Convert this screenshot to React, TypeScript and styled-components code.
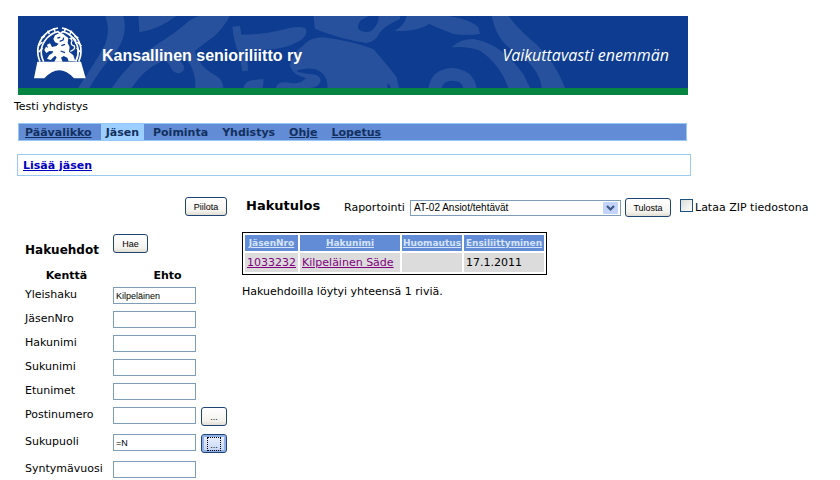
import React, { useState } from "react";
import styled, { createGlobalStyle } from "styled-components";

const GlobalStyle = createGlobalStyle`
  *, *::before, *::after { box-sizing: border-box; }
  body {
    margin: 0;
    background: #fff;
    color: #000;
    font-family: "DejaVu Sans", Verdana, sans-serif;
    font-size: 11px;
    line-height: 14px;
  }
`;

const Page = styled.div`
  padding: 16px 14px 0;
`;

const Banner = styled.header`
  display: flex;
  align-items: center;
  justify-content: space-between;
  position: relative;
  overflow: hidden;
  max-width: 670px;
  height: 79px;
  margin-left: 4px;
  padding: 0 19px 0 12px;
  border-bottom: 7px solid #058442;
  background: #0d3c90;
  color: #fff;
`;

const Watermark = styled.svg`
  position: absolute;
  top: 0;
  left: 0;
  width: 670px;
  height: 72px;
  fill: #27519c;
`;

const Brand = styled.div`
  display: flex;
  align-items: center;
  gap: 12px;
  position: relative;
  padding-top: 4px;
`;

const Emblem = styled.svg`
  width: 60px;
  height: 60px;
`;

const Organisation = styled.h1`
  margin: 4px 0 0;
  font: bold 16px/20px "Liberation Sans", Arial, sans-serif;
`;

const Slogan = styled.p`
  position: relative;
  margin: 6px 0 0;
  font: italic 16px/20px "Open Sans", sans-serif;
`;

const Association = styled.p`
  margin: 5px 0 0;
`;

const Menu = styled.nav`
  display: flex;
  align-items: stretch;
  gap: 4px;
  max-width: 669px;
  height: 18px;
  margin: 9px 0 0 4px;
  padding-left: 1px;
  border: 1px solid #98c8f8;
  background: #638cd6;
  font-weight: bold;
  line-height: 18px;
`;

const MenuLink = styled.a<{ $current?: boolean; $plain?: boolean }>`
  padding: 0 5px;
  background: ${(p) => (p.$current ? "#9cceff" : "transparent")};
  color: #12305f;
  text-decoration: ${(p) => (p.$plain ? "none" : "underline")};
`;

const SubMenu = styled.nav`
  display: flex;
  align-items: center;
  max-width: 674px;
  height: 22px;
  margin: 13px 0 0 3px;
  padding: 2px 0 0 5px;
  border: 1px solid #9ccaee;
  font-weight: bold;
`;

const SubLink = styled.a`
  color: #0000c0;
`;

const Columns = styled.main`
  display: grid;
  grid-template-columns: 202px 1fr;
  gap: 15px;
  margin: 21px 0 0 11px;
`;

const Criteria = styled.form``;

const HideRow = styled.div`
  display: flex;
  justify-content: flex-end;
`;

const HeadRow = styled.div`
  display: grid;
  grid-template-columns: 88px 1fr;
  align-items: start;
  justify-items: start;
  margin-top: 18px;
`;

const SearchTitle = styled.h2`
  margin: 8px 0 0;
  font-size: 12px;
  line-height: 16px;
`;

const ResultTitle = styled.h2`
  width: 98px;
  margin: 0;
  padding: 0 0 4px 4px;
  font-size: 13px;
  line-height: 16px;
`;

const Button = styled.button<{ $width: number; $active?: boolean }>`
  width: ${(p) => p.$width}px;
  height: 19px;
  padding: 1px 0 0;
  border: 1px solid #1f4373;
  border-radius: 3px;
  background: ${(p) => (p.$active ? "linear-gradient(#eef3fd, #c4d5f5)" : "linear-gradient(#fff, #f4f3ee 75%, #e0ddd2)")};
  box-shadow: ${(p) => (p.$active ? "inset 0 0 0 2px #8fb0e8" : "none")};
  color: #000;
  font: 9px/15px "Liberation Sans", Arial, sans-serif;
`;

const DotFocus = styled.span`
  display: block;
  width: 14px;
  height: 14px;
  margin: 0 auto;
  border: 1px dotted #000;
  line-height: 14px;
`;

const FieldHeads = styled.div`
  display: grid;
  grid-template-columns: 83px 1fr;
  margin: 11px 0 4px;
  font-weight: bold;
  text-align: center;
`;

const FieldRow = styled.div<{ $tall?: boolean }>`
  display: grid;
  grid-template-columns: 83px 83px 26px;
  column-gap: 5px;
  align-items: start;
  height: ${(p) => (p.$tall ? 27 : 24)}px;
`;

const FieldLabel = styled.label`
  padding-top: 1px;
`;

const TextBox = styled.input`
  width: 100%;
  height: 17px;
  padding: 0 2px;
  border: 1px solid #7f9db9;
  border-radius: 0;
  background: #fff;
  font: 9px/15px "Liberation Sans", Arial, sans-serif;
`;

const Results = styled.section`
  min-width: 0;
`;

const Toolbar = styled.div`
  display: flex;
  align-items: center;
  gap: 4px;
  height: 21px;
`;

const SelectFrame = styled.span`
  display: grid;
  grid-template-columns: 1fr 16px;
  align-items: center;
  width: 211px;
  height: 16px;
  padding-right: 1px;
  border: 1px solid #7f9db9;
`;

const Select = styled.select`
  grid-area: 1 / 1 / 2 / 3;
  width: 100%;
  height: 14px;
  padding: 0 18px 0 3px;
  border: 0;
  appearance: none;
  background: transparent;
  color: #000;
  font: 10px/14px "Liberation Sans", Arial, sans-serif;
`;

const Arrow = styled.svg`
  grid-area: 1 / 2 / 2 / 3;
  width: 15px;
  height: 12px;
  pointer-events: none;
`;

const ToolLabel = styled.label`
  width: 62px;
  white-space: nowrap;
`;

const ZipLabel = styled.label`
  display: flex;
  align-items: center;
  gap: 2px;
  margin-left: 5px;
  white-space: nowrap;
`;

const Tick = styled.input`
  width: 13px;
  height: 13px;
  margin: 0 0 4px;
  border: 1px solid #1d5281;
  appearance: none;
  background: linear-gradient(135deg, #dcdcd7, #fff);
  &:checked { background: #21a121; }
`;

const ResultTable = styled.table`
  margin-top: 14px;
  border: 1px solid #000;
  border-collapse: separate;
  border-spacing: 2px;
`;

const HeadCell = styled.th<{ $width: number }>`
  width: ${(p) => p.$width}px;
  height: 16px;
  padding: 0;
  background: #638cd6;
  font-size: 9px;
  line-height: 12px;
  text-align: center;
`;

const SortLink = styled.a`
  color: #d5e4fb;
`;

const Cell = styled.td`
  height: 19px;
  padding: 1px 2px 0;
  background: #dcdcdc;
  line-height: 14px;
  white-space: nowrap;
`;

const RecordLink = styled.a`
  color: #800080;
`;

const Summary = styled.p`
  margin: 10px 0 0;
`;

const menu = [
  { label: "Päävalikko" },
  { label: "Jäsen", current: true, plain: true },
  { label: "Poiminta", plain: true },
  { label: "Yhdistys", plain: true },
  { label: "Ohje" },
  { label: "Lopetus" },
];

const fields = [
  { id: "yleishaku", label: "Yleishaku", value: "Kilpeläinen" },
  { id: "jasennro", label: "JäsenNro", value: "" },
  { id: "hakunimi", label: "Hakunimi", value: "" },
  { id: "sukunimi", label: "Sukunimi", value: "" },
  { id: "etunimet", label: "Etunimet", value: "" },
  { id: "postinumero", label: "Postinumero", value: "", picker: true },
  { id: "sukupuoli", label: "Sukupuoli", value: "=N", picker: true, active: true },
  { id: "syntymavuosi", label: "Syntymävuosi", value: "" },
];

const columns = [
  { label: "JäsenNro", width: 53 },
  { label: "Hakunimi", width: 100 },
  { label: "Huomautus", width: 60 },
  { label: "Ensiliittyminen", width: 80 },
];

function BannerArt() {
  return (
    <Watermark viewBox="0 0 670 72" aria-hidden="true">
      <g transform="translate(62 -2) scale(.33333)">
        <path d="M75 5H130Q145 60 110 110Q60 165 28 222H-6Q50 140 76 90Q92 45 75 5Z" />
        <path d="M175 5H290Q240 45 178 55Z" />
        <path d="M95 222Q150 140 225 95Q290 55 322 25Q345 5 370 5H450Q435 35 405 65Q370 90 345 110Q350 150 400 180Q430 195 430 222H345Q350 190 330 150Q315 130 300 140Q325 165 300 177Q280 180 272 160Q265 140 250 140Q190 165 155 222Z" />
        <path d="M457 38L480 35L484 62Q550 62 605 48Q650 34 676 42Q686 56 668 74Q640 96 590 104Q540 110 500 108L503 150L505 170L487 172L478 120Q462 90 457 38Z" />
        <path d="M490 222Q495 200 520 198L550 195Q552 205 548 222Z" />
        <path d="M588 222Q590 202 620 205Q660 215 678 192Q640 185 632 160Q650 178 690 180Q720 180 722 200Q715 222 690 222Z" />
      </g>
      <g transform="translate(282 -2) scale(.33333)">
        <path d="M-30 155Q-24 118 12 92Q30 70 70 70Q150 80 220 105Q260 150 290 190L297 222H272Q270 208 262 210V222H82Q85 180 45 165Q10 160-15 172Q-28 166-30 155Z" />
        <path d="M40 5L45 45Q120 75 200 87Q225 85 240 55Q255 35 300 15L300 5H235Q240 25 215 50Q190 60 175 45Q170 20 200 10L205 5Z" />
        <path d="M320 5H440Q510 15 535 40L540 60Q500 65 460 60Q420 45 388 30Q350 55 283 50Q315 35 320 5Z" />
        <path d="M455 100Q480 75 520 75Q600 85 670 180L690 222H625Q600 150 540 110Q500 95 455 100Z" />
        <path d="M575 5H625Q650 40 690 75Q760 130 795 222H725Q720 160 640 110Q590 80 575 5Z" />
        <path d="M385 222Q395 165 455 162Q520 165 530 222H490Q485 200 458 200Q430 200 425 222Z" />
      </g>
    </Watermark>
  );
}

function LionEmblem() {
  return (
    <Emblem viewBox="0 0 180 180" aria-hidden="true" fill="none" stroke="#fff">
      <path d="M30 113Q12 70 42 35Q58 16 84 12M146 113Q164 70 136 35Q120 16 96 12" strokeWidth="5" />
      <path d="M41 113Q22 75 51 42Q66 27 84 23L91 29L98 23Q116 27 129 42Q156 75 137 113" strokeWidth="5" />
      <path d="M24 66L37 54M26 84L38 72M33 41L45 37M53 20L58 30M71 12L75 23M154 66L142 54M151 84L140 72M145 41L133 37M125 20L120 30M107 12L103 23" strokeWidth="5" />
      <path
        d="M75 34L87 28L99 29L107 36L115 42L113 57L119 69L117 83L130 94L136 112H116L112 101L101 96L93 101L98 113H73L80 100L75 95L62 108L51 104L58 93L67 88L70 82L58 81L49 87L43 78L48 68L54 72L51 62L60 58L66 69L79 66L86 59L75 55L70 45Z"
        fill="#fff"
        stroke="none"
      />
      <path d="M82 42L91 40M89 52L99 48L101 41M94 65L105 61M92 81L105 86" stroke="#0d3c90" strokeWidth="4" />
      <path d="M121 82Q137 77 133 66Q123 64 124 55Q129 48 121 43Q132 38 137 49Q135 57 140 61" strokeWidth="4" />
      <path d="M22 113H153L167 163H132Q88 115 43 163H12Z" fill="#fff" stroke="none" />
    </Emblem>
  );
}

export default function App() {
  const [values, setValues] = useState<Record<string, string>>(
    Object.fromEntries(fields.map((f) => [f.id, f.value])),
  );

  return (
    <>
      <GlobalStyle />
      <Page>
        <Banner>
          <BannerArt />
          <Brand>
            <LionEmblem />
            <Organisation>Kansallinen senioriliitto ry</Organisation>
          </Brand>
          <Slogan>Vaikuttavasti enemmän</Slogan>
        </Banner>
        <Association>Testi yhdistys</Association>
        <Menu>
          {menu.map((m) => (
            <MenuLink key={m.label} href="#" $current={m.current} $plain={m.plain}>
              {m.label}
            </MenuLink>
          ))}
        </Menu>
        <SubMenu>
          <SubLink href="#">Lisää jäsen</SubLink>
        </SubMenu>

        <Columns>
          <Criteria onSubmit={(e) => e.preventDefault()}>
            <HideRow>
              <Button type="button" $width={42}>Piilota</Button>
            </HideRow>
            <HeadRow>
              <SearchTitle>Hakuehdot</SearchTitle>
              <Button type="submit" $width={35}>Hae</Button>
            </HeadRow>
            <FieldHeads>
              <span>Kenttä</span>
              <span>Ehto</span>
            </FieldHeads>
            {fields.map((f) => (
              <FieldRow key={f.id} $tall={f.picker}>
                <FieldLabel htmlFor={f.id}>{f.label}</FieldLabel>
                <TextBox
                  id={f.id}
                  type="text"
                  value={values[f.id]}
                  onChange={(e) => setValues({ ...values, [f.id]: e.target.value })}
                />
                {f.picker && (
                  <Button type="button" $width={26} $active={f.active} aria-label={`Valitse ${f.label}`}>
                    {f.active ? <DotFocus>...</DotFocus> : "..."}
                  </Button>
                )}
              </FieldRow>
            ))}
          </Criteria>

          <Results>
            <Toolbar>
              <ResultTitle>Hakutulos</ResultTitle>
              <ToolLabel htmlFor="report">Raportointi</ToolLabel>
              <SelectFrame>
                <Select id="report" defaultValue="at02">
                  <option value="at02">AT-02 Ansiot/tehtävät</option>
                </Select>
                <Arrow viewBox="0 0 15 12" aria-hidden="true">
                  <rect width="15" height="12" rx="1" fill="#c3d3fb" />
                  <path d="M4 4l3.500 3.500L11 4" fill="none" stroke="#3f5785" strokeWidth="2.200" />
                </Arrow>
              </SelectFrame>
              <Button type="button" $width={46}>Tulosta</Button>
              <ZipLabel>
                <Tick type="checkbox" />
                Lataa ZIP tiedostona
              </ZipLabel>
            </Toolbar>
            <ResultTable>
              <thead>
                <tr>
                  {columns.map((c) => (
                    <HeadCell key={c.label} $width={c.width} scope="col">
                      <SortLink href="#">{c.label}</SortLink>
                    </HeadCell>
                  ))}
                </tr>
              </thead>
              <tbody>
                <tr>
                  <Cell><RecordLink href="#">1033232</RecordLink></Cell>
                  <Cell><RecordLink href="#">Kilpeläinen Säde</RecordLink></Cell>
                  <Cell />
                  <Cell>17.1.2011</Cell>
                </tr>
              </tbody>
            </ResultTable>
            <Summary>Hakuehdoilla löytyi yhteensä 1 riviä.</Summary>
          </Results>
        </Columns>
      </Page>
    </>
  );
}
